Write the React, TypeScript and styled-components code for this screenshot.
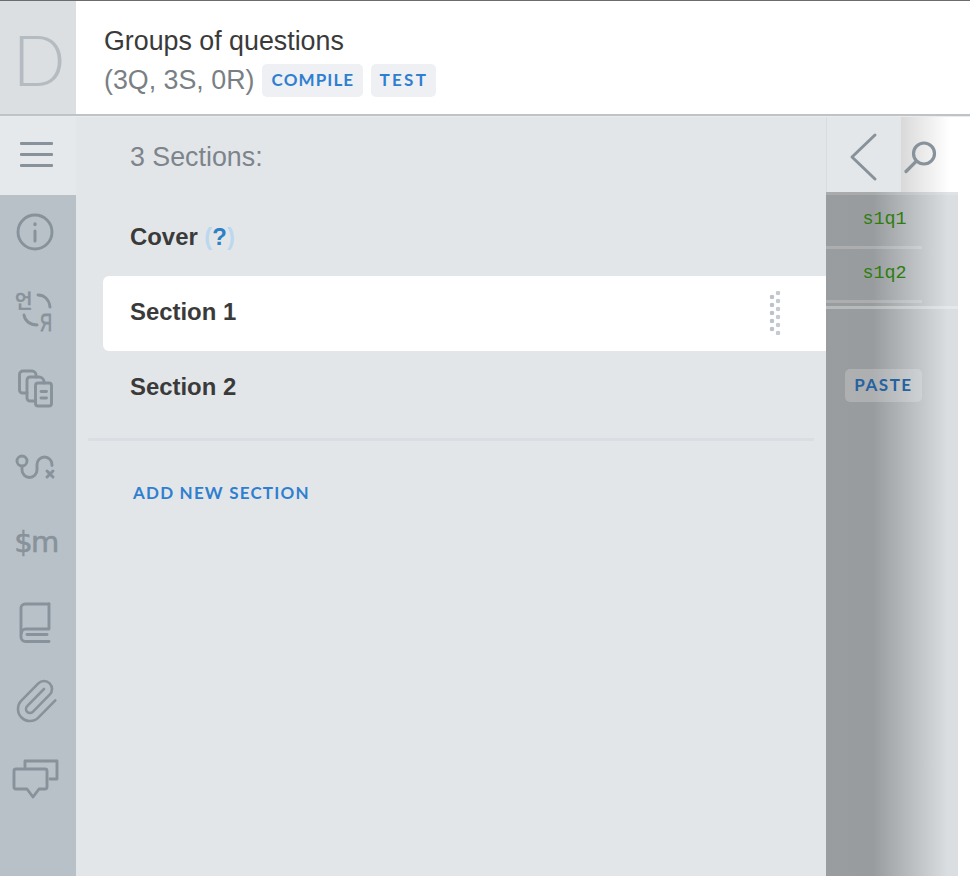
import React from "react";
import styled, { createGlobalStyle } from "styled-components";

const GlobalStyle = createGlobalStyle`
    html, body {
        margin: 0;
        padding: 0;
        background: #fff;
        font-family: "Liberation Sans", Arial, sans-serif;
        overflow: hidden;
    }
`;

const Page = styled.div`
    width: 970px;
    height: 876px;
    display: flex;
    flex-direction: column;
    overflow: hidden;
`;

const Header = styled.header`
    display: flex;
    height: 113px;
    border-top: 1px solid #6a6d70;
    flex: none;
`;

const LogoCell = styled.div`
    width: 76px;
    flex: none;
    background: #dcdfe2;
    display: flex;
    align-items: center;
    justify-content: center;
`;

const LogoLetter = styled.span`
    font-family: Lato, "Open Sans", sans-serif;
    font-weight: 300;
    font-size: 70px;
    line-height: 1;
    color: #b4bbc1;
    margin: 3px 0 0 2px;
`;

const TitleBlock = styled.div`
    padding: 23px 0 0 28px;
`;

const Title = styled.div`
    font-size: 26.8px;
    line-height: 34px;
    color: #3a3a3a;
`;

const SubRow = styled.div`
    display: flex;
    align-items: center;
    gap: 8px;
    margin-top: 6px;
`;

const Counts = styled.span`
    font-size: 26.8px;
    line-height: 33px;
    color: #7a7f84;
`;

const ActionButton = styled.button<{ $dim?: boolean; $width: number; $tracking: number }>`
    border: 0;
    width: ${({ $width }) => $width}px;
    height: 33px;
    padding: 0 0 2px;
    border-radius: 5px;
    background: ${({ $dim }) => ($dim ? "rgba(255, 255, 255, 0.2)" : "#eef0f3")};
    color: ${({ $dim }) => ($dim ? "#26629f" : "#2f7fd0")};
    font-family: Lato, "Open Sans", sans-serif;
    font-weight: 700;
    font-size: 17px;
    letter-spacing: ${({ $tracking }) => $tracking}px;
`;

const HeaderRule = styled.div`
    height: 2px;
    flex: none;
    background: #bfc3c6;
    border-bottom: 1px solid #e9ebed;
    box-sizing: content-box;
`;

const Body = styled.div`
    display: flex;
    flex: 1;
    min-height: 0;
`;

const Rail = styled.nav`
    width: 76px;
    flex: none;
    background: #b9c1c8;
    display: flex;
    flex-direction: column;
`;

const MenuCell = styled.div`
    height: 78px;
    flex: none;
    background: #e6e9ec;
    display: flex;
    flex-direction: column;
    align-items: center;
    gap: 8px;
    padding: 25px 4px 0 0;
    box-sizing: border-box;
`;

const MenuBar = styled.span`
    width: 33px;
    height: 3px;
    border-radius: 1px;
    background: #87929a;
`;

const RailItem = styled.div`
    height: 78px;
    flex: none;
    display: flex;
    align-items: center;
    justify-content: center;
`;

const RailIcon = styled.svg.attrs({
    viewBox: "0 0 48 48",
    width: 48,
    height: 48,
    fill: "none",
    stroke: "#87929a",
    strokeWidth: 2.9,
    strokeLinecap: "round",
    strokeLinejoin: "round",
})`
    overflow: visible;
`;

const MoneyGlyph = styled.span`
    font-family: "DejaVu Sans", sans-serif;
    font-size: 29px;
    letter-spacing: -1.5px;
    color: #87929a;
    -webkit-text-stroke: 0.6px #87929a;
    margin: -8px 4px 0 0;
`;

const Panel = styled.main`
    width: 750px;
    flex: none;
    background: #e3e6e9;
    display: flex;
    flex-direction: column;
`;

const PanelHeading = styled.div`
    height: 84px;
    flex: none;
    padding: 26px 0 0 54px;
    box-sizing: border-box;
    font-size: 26.8px;
    line-height: 29px;
    color: #7d848b;
`;

const SectionRow = styled.div<{ $active?: boolean }>`
    height: 75px;
    flex: none;
    margin-left: 27px;
    padding: 0 45px 4px 27px;
    box-sizing: border-box;
    display: flex;
    align-items: center;
    justify-content: space-between;
    font-weight: 700;
    font-size: 23.9px;
    color: #3a3a3a;
    border-radius: 6px 0 0 6px;
    background: ${({ $active }) => ($active ? "#fff" : "transparent")};
`;

const Help = styled.span`
    color: #bcd8ef;
`;

const HelpMark = styled.span`
    color: #2f7fc4;
`;

const DragHandle = styled.span`
    width: 12px;
    height: 44px;
    margin-top: 3px;
    background-image: radial-gradient(circle at 3px 4px, #bcc2ca 2px, transparent 2.6px),
        radial-gradient(circle at 9px 4px, #c5cad2 2px, transparent 2.6px);
    background-size: 12px 8px;
    background-position: 0 2px, 0 -2px;
    background-repeat: repeat-y;
`;

const Divider = styled.div`
    height: 3px;
    flex: none;
    margin: 12px 12px 0 12px;
    background: #dadde1;
`;

const AddSection = styled.a`
    margin: 40px 0 0 57px;
    font-family: Lato, "Open Sans", sans-serif;
    font-weight: 700;
    font-size: 17px;
    line-height: 24px;
    letter-spacing: 1.2px;
    color: #2f7fd0;
`;

const Tail = styled.aside`
    width: 132px;
    flex: none;
    display: flex;
    flex-direction: column;
`;

const TailTop = styled.div`
    height: 75px;
    flex: none;
    display: flex;
`;

const BackCell = styled.div`
    width: 75px;
    flex: none;
    background: #e4e7ea;
    border-left: 1px solid #d9dcdf;
    box-sizing: border-box;
    display: flex;
    align-items: center;
    justify-content: center;
`;

const SearchCell = styled.div`
    flex: 1;
    background: linear-gradient(90deg, #d9d9d9 0, #ffffff 85%);
    display: flex;
    align-items: center;
    justify-content: center;
`;

const TailIcon = styled.svg.attrs({
    fill: "none",
    stroke: "#87929a",
    strokeLinecap: "round",
    strokeLinejoin: "round",
})<{ $shift?: string }>`
    margin: ${({ $shift }) => $shift || "0"};
`;

const QuestionColumn = styled.div`
    flex: 1;
    background: linear-gradient(90deg, #9a9d9f 0, #999c9e 47px, #dadee1 122px);
    box-shadow: inset 0 3px 0 rgba(255, 255, 255, 0.15);
    padding-top: 3px;
`;

const QuestionItem = styled.div`
    width: 96px;
    height: 54px;
    display: flex;
    align-items: center;
    justify-content: center;
    padding: 0 0 2px 21px;
    box-sizing: border-box;
    font-family: "Liberation Mono", monospace;
    font-size: 18.4px;
    color: #2e7d0e;
    border-bottom: 3px solid rgba(255, 255, 255, 0.18);
`;

const ColumnRule = styled.div`
    height: 3px;
    margin-top: 3px;
    background: rgba(255, 255, 255, 0.3);
`;

const PasteRow = styled.div`
    width: 96px;
    margin-top: 60px;
    display: flex;
    justify-content: flex-end;
`;

const sections = ["Section 1", "Section 2"];

export default function App() {
    return (
        <Page>
            <GlobalStyle />
            <Header>
                <LogoCell>
                    <LogoLetter>D</LogoLetter>
                </LogoCell>
                <TitleBlock>
                    <Title>Groups of questions</Title>
                    <SubRow>
                        <Counts>(3Q, 3S, 0R)</Counts>
                        <ActionButton $width={101} $tracking={1.1}>COMPILE</ActionButton>
                        <ActionButton $width={65} $tracking={2.3}>TEST</ActionButton>
                    </SubRow>
                </TitleBlock>
            </Header>
            <HeaderRule />
            <Body>
                <Rail>
                    <MenuCell>
                        <MenuBar />
                        <MenuBar />
                        <MenuBar />
                    </MenuCell>
                    <RailItem>
                        <RailIcon>
                            <circle cx="21" cy="22" r="17" />
                            <path d="M21 21v10" strokeWidth="3" />
                            <path d="M21 14v.5" strokeWidth="3.4" />
                        </RailIcon>
                    </RailItem>
                    <RailItem>
                        <RailIcon>
                            <text x="1" y="20" fontFamily="'Noto Sans CJK KR', sans-serif" fontWeight="500" fontSize="19" fill="#87929a" stroke="#87929a" strokeWidth="0.5">
                                언
                            </text>
                            <text x="26" y="43" textLength="12" lengthAdjust="spacingAndGlyphs" fontFamily="'Liberation Sans', sans-serif" fontSize="23" fill="#87929a" stroke="#87929a" strokeWidth="0.8">
                                Я
                            </text>
                            <path d="M24 7c6 0 11 4 12 12" />
                            <path d="M10 27c1 6 6 10 13 10" />
                        </RailIcon>
                    </RailItem>
                    <RailItem>
                        <RailIcon>
                            <rect x="21.5" y="17" width="16" height="23" rx="2.5" />
                            <path d="M27 25.5h5.500M27 32h5.500" />
                            <path d="M30 17v-1a5 5 0 0 0-5-5h-9a3 3 0 0 0-3 3v18a3 3 0 0 0 3 3h5" />
                            <path d="M22 11V9a4 4 0 0 0-4-4H9a3.500 3.500 0 0 0-3.500 3.500V24a3 3 0 0 0 3 3H13" />
                        </RailIcon>
                    </RailItem>
                    <RailItem>
                        <RailIcon>
                            <circle cx="8" cy="17" r="5" />
                            <path d="M8 23v3a7.5 7.5 0 0 0 15 0v-5.500a7.500 7.500 0 0 1 15 0v1" />
                            <path d="M33 27l6 6M39 27l-6 6" strokeWidth="3" />
                        </RailIcon>
                    </RailItem>
                    <RailItem>
                        <MoneyGlyph>$m</MoneyGlyph>
                    </RailItem>
                    <RailItem>
                        <RailIcon>
                            <path d="M35 4H11a4 4 0 0 0-4 4v29a4.500 4.500 0 0 0 4.500 4.500H35" />
                            <path d="M35 4v25H11.500a4 4 0 0 0-4 4" />
                            <path d="M13 34.500h20" />
                        </RailIcon>
                    </RailItem>
                    <RailItem>
                        <RailIcon>
                            <g transform="translate(-2,-1) scale(2)" strokeWidth="1.3">
                                <path d="m16 6-8.414 8.586a2 2 0 0 0 2.829 2.829l8.414-8.586a4 4 0 1 0-5.657-5.657l-8.379 8.551a6 6 0 1 0 8.485 8.485l8.379-8.551" />
                            </g>
                        </RailIcon>
                    </RailItem>
                    <RailItem>
                        <RailIcon>
                            <path d="M11 11V5h32v18h-7" />
                            <path d="M2 13h29a2 2 0 0 1 2 2v16a2 2 0 0 1-2 2h-6l-6 8-6-8H2a2 2 0 0 1-2-2V15a2 2 0 0 1 2-2z" />
                        </RailIcon>
                    </RailItem>
                </Rail>
                <Panel>
                    <PanelHeading>3 Sections:</PanelHeading>
                    <SectionRow>
                        <span>
                            Cover{" "}
                            <Help>
                                (<HelpMark>?</HelpMark>)
                            </Help>
                        </span>
                    </SectionRow>
                    {sections.map((name, i) => (
                        <SectionRow key={name} $active={i === 0}>
                            <span>{name}</span>
                            {i === 0 && <DragHandle />}
                        </SectionRow>
                    ))}
                    <Divider />
                    <AddSection>ADD NEW SECTION</AddSection>
                </Panel>
                <Tail>
                    <TailTop>
                        <BackCell>
                            <TailIcon width="30" height="52" viewBox="0 0 30 52" strokeWidth="3" $shift="4px 0 0 -2px">
                                <path d="M27 4 4 26l23 22" />
                            </TailIcon>
                        </BackCell>
                        <SearchCell>
                            <TailIcon width="40" height="40" viewBox="0 0 40 40" strokeWidth="3.2" $shift="0 16px 0 0">
                                <circle cx="22" cy="18.500" r="10.500" />
                                <path d="M14 26.500 4 36.500" />
                            </TailIcon>
                        </SearchCell>
                    </TailTop>
                    <QuestionColumn>
                        <QuestionItem>s1q1</QuestionItem>
                        <QuestionItem>s1q2</QuestionItem>
                        <ColumnRule />
                        <PasteRow>
                            <ActionButton $dim $width={77} $tracking={1.5}>PASTE</ActionButton>
                        </PasteRow>
                    </QuestionColumn>
                </Tail>
            </Body>
        </Page>
    );
}
